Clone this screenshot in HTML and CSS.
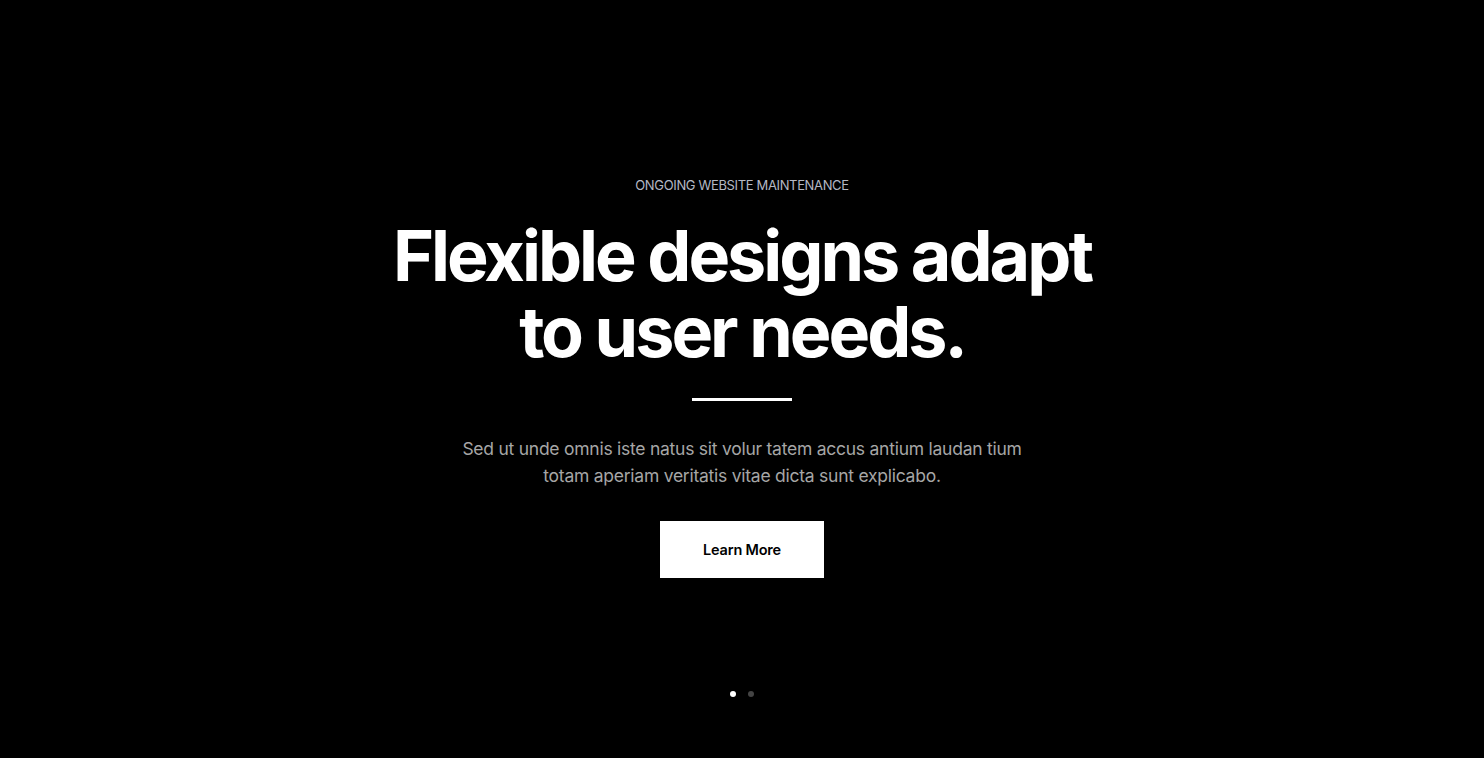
FILE: index.html
```
<!DOCTYPE html>
<html>
<head>
<meta charset="utf-8">
<link rel="stylesheet" href="styles.css">
</head>
<body>
<section class="hero">
  <div class="content">
    <p class="eyebrow">ONGOING WEBSITE MAINTENANCE</p>
    <h1 class="title"><span class="line">Flexible designs adapt</span><span class="line">to user needs.</span></h1>
    <div class="divider"></div>
    <p class="lead">Sed ut unde omnis iste natus sit volur tatem accus antium laudan tium<br>totam aperiam veritatis vitae dicta sunt explicabo.</p>
    <a class="btn" href="#">Learn More</a>
  </div>
  <div class="dots">
    <span class="dot active"></span>
    <span class="dot"></span>
  </div>
</section>
</body>
</html>
```
FILE: styles.css
```
* { box-sizing: border-box; }
html, body { margin: 0; padding: 0; background: #000; }
body { font-family: Inter, "Noto Sans", sans-serif; }
.hero {
  height: 758px;
  display: flex;
  flex-direction: column;
  align-items: center;
  padding-top: 177px;
}
.content {
  display: flex;
  flex-direction: column;
  align-items: center;
  text-align: center;
}
.eyebrow {
  margin: 0;
  font-size: 13px;
  line-height: 16px;
  color: #b4b8c4;
  letter-spacing: -0.35px;
}
.title {
  margin: 25px 0 0;
  font-size: 70px;
  line-height: 76px;
  font-weight: 700;
  color: #fff;
  letter-spacing: -3px;
  display: flex;
  flex-direction: column;
  align-items: center;
}
.line { display: block; height: 76px; }
.divider {
  width: 100px;
  height: 3px;
  background: #fff;
  margin-top: 28px;
}
.lead {
  margin: 34px 0 0;
  font-size: 17.5px;
  line-height: 27px;
  color: #a6a6a6;
  letter-spacing: -0.25px;
}
.btn {
  margin-top: 32px;
  width: 164px;
  height: 57px;
  background: #fff;
  color: #000;
  text-decoration: none;
  font-weight: 600;
  font-size: 14.5px;
  display: flex;
  align-items: center;
  justify-content: center;
  letter-spacing: -0.2px;
}
.dots {
  margin-top: 113px;
  display: flex;
  gap: 12px;
  align-items: center;
}
.dot {
  width: 6px;
  height: 6px;
  border-radius: 50%;
  background: #444;
}
.dot.active { background: #fff; }
```
